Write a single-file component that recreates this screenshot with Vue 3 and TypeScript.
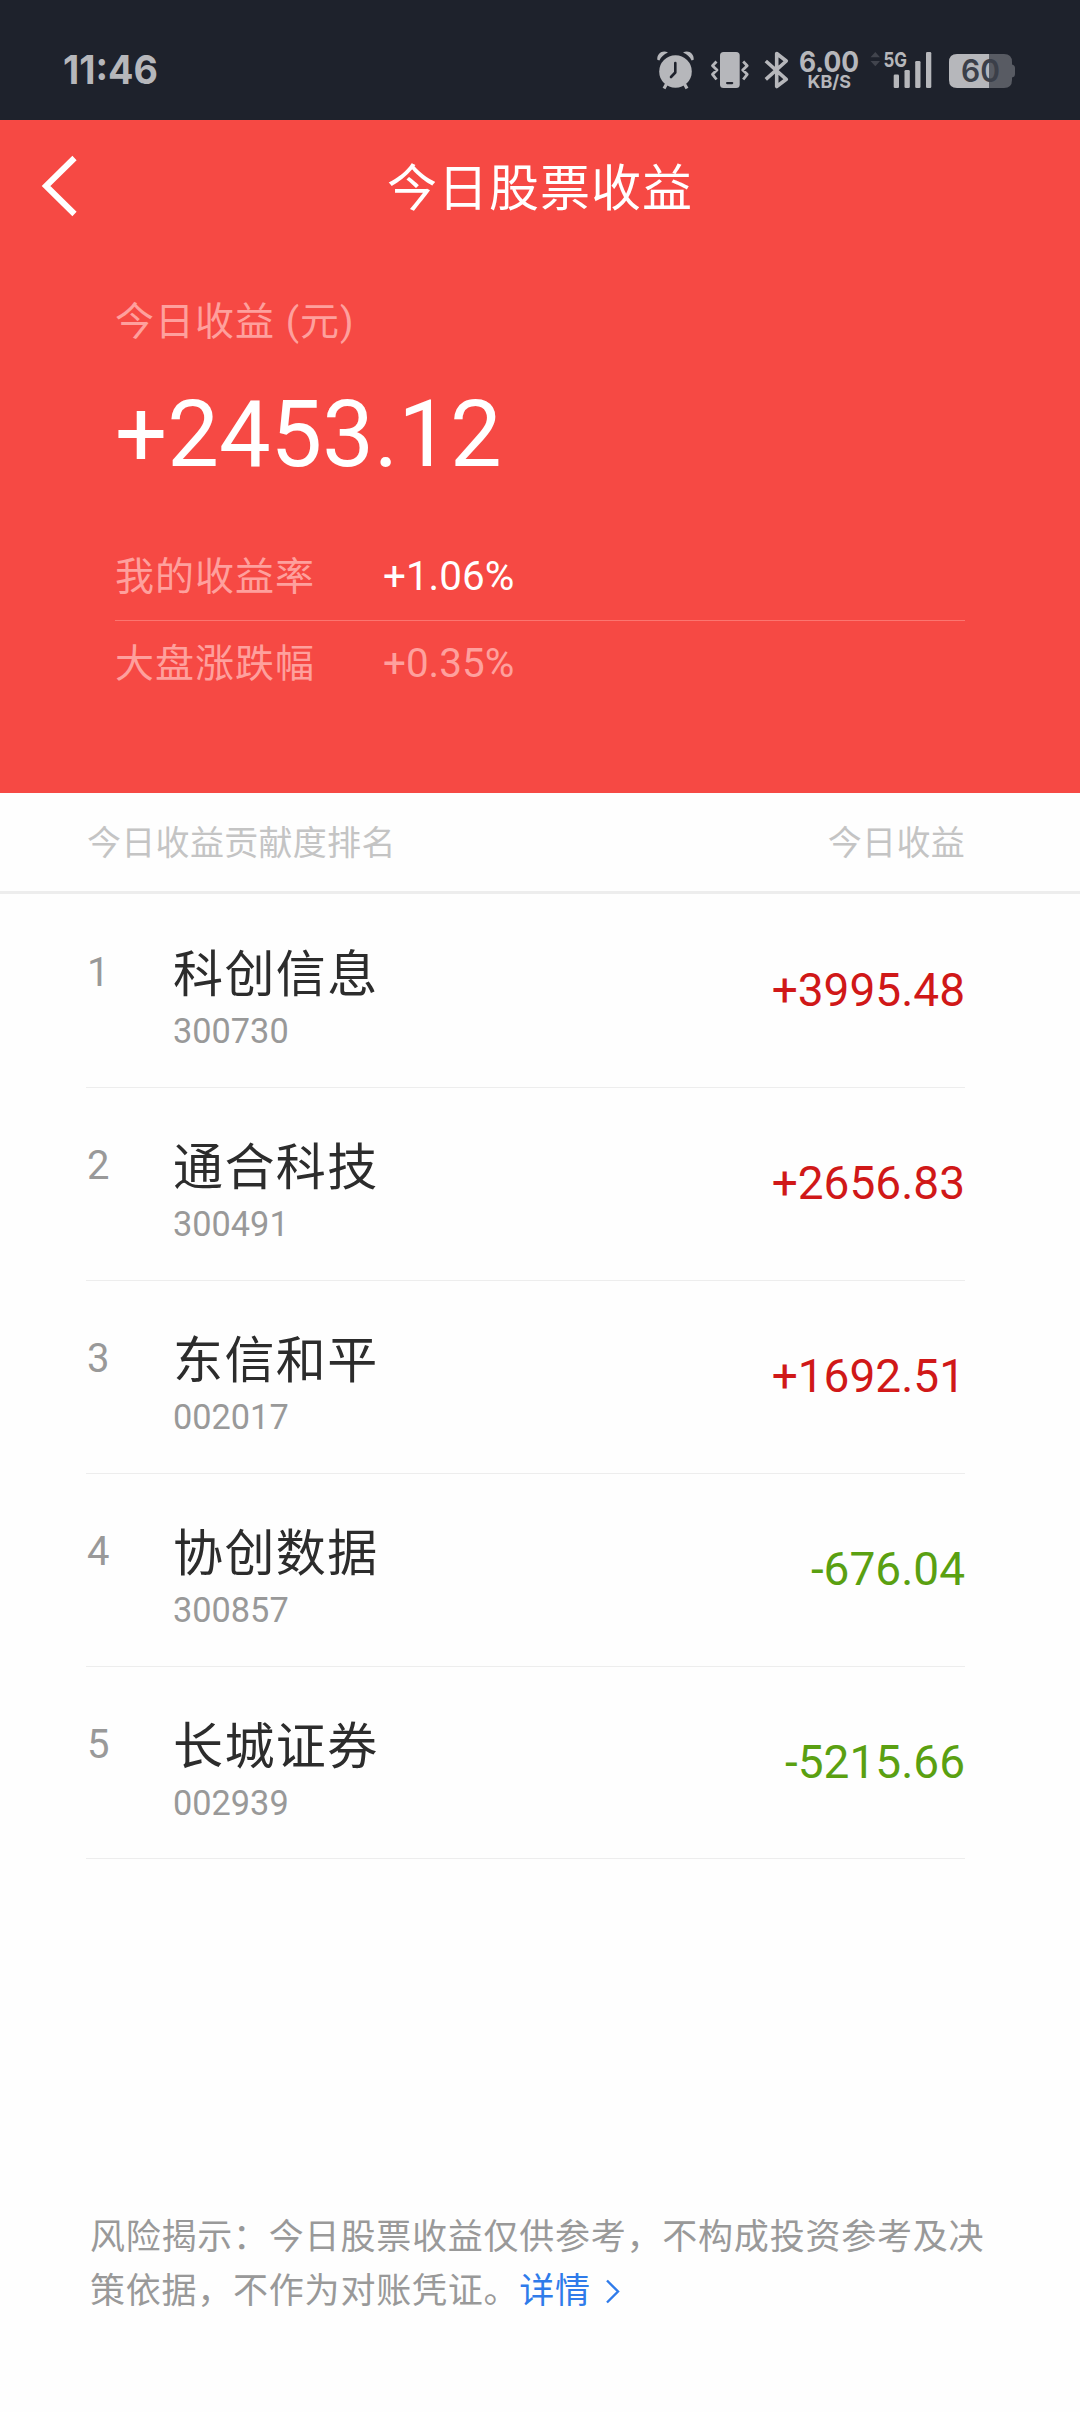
<script setup lang="ts">
interface Stock {
  name: string
  code: string
  profit: string
}

const stocks: Stock[] = [
  { name: '科创信息', code: '300730', profit: '+3995.48' },
  { name: '通合科技', code: '300491', profit: '+2656.83' },
  { name: '东信和平', code: '002017', profit: '+1692.51' },
  { name: '协创数据', code: '300857', profit: '-676.04' },
  { name: '长城证券', code: '002939', profit: '-5215.66' },
]
</script>

<template>
  <div class="page">
    <div class="status">
      <svg class="time" width="100" height="44" viewBox="0 0 100 44">
        <text x="3" y="37" font-size="40" font-weight="700" textLength="95" lengthAdjust="spacingAndGlyphs">11:46</text>
      </svg>
      <svg class="status-icons" width="384" height="44" viewBox="0 0 384 44">
        <!-- alarm -->
        <g>
          <circle cx="19.5" cy="22.5" r="16.3" />
          <path d="M1.3 10.800C.8 4.200 7 .6 12 3.600Q5.600 6.400 3.400 11.600ZM37.700 10.800C38.200 4.200 32 .6 27 3.600Q33.400 6.400 35.600 11.600Z" />
          <path d="M10.500 35L8 39.500M28.500 35L31 39.500" stroke="#b6b7bb" stroke-width="3.200" fill="none" />
          <path d="M19.300 14V23.500L15 28" stroke="#1f222c" stroke-width="2.600" stroke-linecap="round" stroke-linejoin="round" fill="none" />
        </g>
        <!-- vibrate -->
        <g>
          <rect x="64" y="3" width="19.700" height="36" rx="3.500" />
          <rect x="70" y="33" width="7.300" height="2.200" rx="1.100" fill="#1f222c" />
          <path d="M60.500 12.500L56.500 16.700L61 21L56.500 25.300L60.500 30.500M87.200 12.500L91.200 16.700L86.700 21L91.200 25.300L87.200 30.500" stroke="#b6b7bb" stroke-width="2.800" fill="none" stroke-linejoin="round" />
        </g>
        <!-- bluetooth -->
        <path d="M109.800 12L130.300 30.300L120.700 37.500V4.500L130.300 12L109.800 30.300" stroke="#b6b7bb" stroke-width="3.600" fill="none" stroke-linejoin="round" />
        <text x="143" y="22.700" font-size="28" font-weight="700" textLength="60" lengthAdjust="spacingAndGlyphs">6.00</text>
        <text x="151.500" y="38.700" font-size="18" font-weight="700" textLength="43.500" lengthAdjust="spacingAndGlyphs">KB/S</text>
        <!-- data direction -->
        <path d="M214.500 8.200L219.300 3L224 8.200ZM214.500 12L219.300 17.200L224 12Z" fill="#41444d" />
        <text x="227.500" y="17.800" font-size="20.500" font-weight="700" textLength="23.500" lengthAdjust="spacingAndGlyphs">5G</text>
        <!-- signal bars -->
        <rect x="237.700" y="25.500" width="5.300" height="13.500" rx="1.300" />
        <rect x="248.500" y="21" width="5.300" height="18" rx="1.300" />
        <rect x="259.200" y="12" width="5.300" height="27" rx="1.300" />
        <rect x="270" y="3" width="5.300" height="36" rx="1.300" />
        <!-- battery -->
        <path d="M333 5H348Q356 5 356 13V15.500Q359 16 359 19V25Q359 28 356 28.500V31Q356 39 348 39H333Z" fill="#585b63" />
        <path d="M333 5H301Q293 5 293 13V31Q293 39 301 39H333Z" />
        <text x="305" y="33.300" font-size="31" font-weight="600" textLength="39" lengthAdjust="spacingAndGlyphs" fill="#3b3f49">60</text>
      </svg>
    </div>

    <header class="hero">
      <nav class="nav">
        <button class="back" aria-label="返回">
          <svg width="40" height="64" viewBox="0 0 40 64"><path d="M35.500 4L7 32L35.500 60" fill="none" stroke="#fff" stroke-width="6" /></svg>
        </button>
        <h1 class="title">今日股票收益</h1>
      </nav>
      <div class="summary">
        <div class="label">今日收益 (元)</div>
        <div class="total">+2453.12</div>
        <div class="rate first"><span class="label">我的收益率</span><span class="rate-value">+1.06%</span></div>
        <div class="rate"><span class="label">大盘涨跌幅</span><span class="rate-value dim">+0.35%</span></div>
      </div>
    </header>

    <div class="list-head"><span>今日收益贡献度排名</span><span>今日收益</span></div>

    <ul class="list">
      <li v-for="(stock, i) in stocks" :key="stock.code" class="row">
        <span class="rank">{{ i + 1 }}</span>
        <div class="stock">
          <div class="name">{{ stock.name }}</div>
          <div class="code">{{ stock.code }}</div>
        </div>
        <span class="profit" :class="stock.profit.startsWith('-') ? 'down' : 'up'">{{ stock.profit }}</span>
      </li>
    </ul>

    <footer class="notice">风险揭示：今日股票收益仅供参考，不构成投资参考及决<br />策依据，不作为对账凭证。<a class="more">详情<svg width="16" height="28" viewBox="0 0 16 28"><path d="M2 2.500L13 13.500L2 24.500" fill="none" stroke="#2f7bea" stroke-width="2.400" /></svg></a></footer>
  </div>
</template>

<style>
body {
  background: #fefefe;
}
</style>

<style scoped>
.page {
  width: 1080px;
  height: 2412px;
  display: flex;
  flex-direction: column;
  background: #fefefe;
  font-family: Roboto, 'Noto Sans CJK SC', sans-serif;
  overflow: hidden;
}
.status {
  height: 120px;
  flex: none;
  box-sizing: border-box;
  padding: 49px 40px 0 60px;
  display: flex;
  justify-content: space-between;
  background: #1e222c;
}
.status svg {
  fill: #b6b7bb;
  font-family: Inter, sans-serif;
  overflow: visible;
}
.time {
  margin-top: -2px;
}
.hero {
  height: 673px;
  flex: none;
  background: #f64944;
  color: #fff;
}
.nav {
  height: 134px;
  display: grid;
  grid-template-columns: 120px 1fr 120px;
  align-items: center;
}
.back {
  margin: -2px 0 0 39px;
  padding: 0;
  border: 0;
  background: none;
  width: 40px;
  height: 64px;
}
.back svg {
  display: block;
}
.title {
  margin: 3px 0 0;
  text-align: center;
  font-size: 50px;
  font-weight: 400;
  line-height: 70px;
  letter-spacing: 1px;
}
.summary {
  padding: 38px 115px 0;
}
.label {
  font-size: 39px;
  line-height: 60px;
  letter-spacing: 1px;
  color: #fea09d;
}
.total {
  margin-top: 31px;
  margin-bottom: 47px;
  font-size: 92px;
  line-height: 104px;
}
.rate {
  height: 86px;
  display: flex;
  align-items: center;
}
.rate.first {
  border-bottom: 1px solid #fb7570;
}
.rate .label {
  width: 268px;
}
.rate-value {
  font-size: 40.4px;
  line-height: 60px;
}
.dim {
  color: #fea09d;
}
.list-head {
  height: 98px;
  flex: none;
  padding: 0 115px 0 87px;
  display: flex;
  align-items: center;
  justify-content: space-between;
  border-bottom: 3px solid #ededed;
  font-size: 34px;
  letter-spacing: 0.3px;
  color: #c4c4c4;
}
.list-head span {
  margin-top: -4px;
}
.list {
  list-style: none;
  margin: 0;
  padding: 1px 115px 0 86px;
}
.row {
  height: 193px;
  box-sizing: border-box;
  border-bottom: 1px solid #ededed;
  display: flex;
}
.row:last-child {
  height: 192px;
}
.rank {
  width: 86px;
  padding: 54px 0 0 1px;
  font-size: 40px;
  line-height: 48px;
  color: #999;
}
.stock {
  flex: 1;
  padding-top: 45px;
}
.name {
  font-size: 50px;
  line-height: 70px;
  letter-spacing: 1.4px;
  color: #2c2c2c;
}
.code {
  margin-top: 1px;
  font-size: 34.3px;
  line-height: 40px;
  color: #999;
}
.profit {
  padding-top: 68px;
  font-size: 46px;
  line-height: 54px;
}
.up {
  color: #d01818;
}
.down {
  color: #5aa011;
}
.notice {
  margin-top: 352px;
  padding-left: 90px;
  font-size: 35px;
  line-height: 54px;
  letter-spacing: 0.77px;
  white-space: nowrap;
  color: #999;
}
.more {
  color: #2f7bea;
}
.more svg {
  margin-left: 14px;
  vertical-align: -3px;
}
</style>
